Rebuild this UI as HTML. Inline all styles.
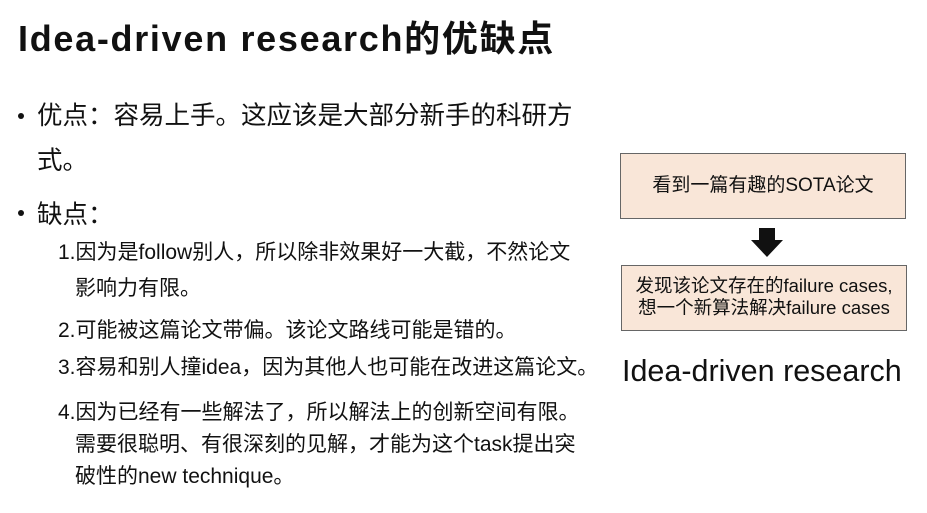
<!DOCTYPE html>
<html><head><meta charset="utf-8"><style>
body{margin:0;width:927px;height:513px;background:#fff;position:relative;overflow:hidden;font-family:"Liberation Sans","Noto Sans CJK SC",sans-serif;color:#111}
.a{position:absolute;white-space:nowrap}
.t{left:18px;top:10px;font-size:36px;font-weight:bold;letter-spacing:1.7px}
.b{font-size:25.5px;left:37px}
.n{font-size:21px}
.d{position:absolute;width:6px;height:6px;border-radius:50%;background:#111;left:18px}
.box{position:absolute;background:#f9e6d8;border:1.5px solid #666;box-sizing:border-box;text-align:center;font-size:18.5px}
</style></head><body>
<div class="a t">Idea-driven research的优缺点</div>
<div class="d" style="top:113px"></div>
<div class="a b" style="top:95px">优点：容易上手。这应该是大部分新手的科研方</div>
<div class="a b" style="top:140px">式。</div>
<div class="d" style="top:210px"></div>
<div class="a b" style="top:194px">缺点：</div>
<div class="a n" style="left:58px;top:236px">1.因为是follow别人，所以除非效果好一大截，不然论文</div>
<div class="a n" style="left:75px;top:272px">影响力有限。</div>
<div class="a n" style="left:58px;top:314px">2.可能被这篇论文带偏。该论文路线可能是错的。</div>
<div class="a n" style="left:58px;top:351px">3.容易和别人撞idea，因为其他人也可能在改进这篇论文。</div>
<div class="a n" style="left:58px;top:396px">4.因为已经有一些解法了，所以解法上的创新空间有限。</div>
<div class="a n" style="left:75px;top:428px">需要很聪明、有很深刻的见解，才能为这个task提出突</div>
<div class="a n" style="left:75px;top:460px">破性的new technique。</div>
<div class="box" style="left:620px;top:153px;width:286px;height:66px;line-height:63px;font-size:19px">看到一篇有趣的SOTA论文</div>
<svg class="a" style="left:750px;top:228px" width="34" height="30"><polygon points="9,0 25,0 25,12 33,12 17,29 1,12 9,12" fill="#111"/></svg>
<div class="box" style="left:621px;top:265px;width:286px;height:66px;padding-top:9px;line-height:22px">发现该论文存在的failure cases,<br>想一个新算法解决failure cases</div>
<div class="a" style="left:622px;top:354px;font-size:30.5px">Idea-driven research</div>
</body></html>
